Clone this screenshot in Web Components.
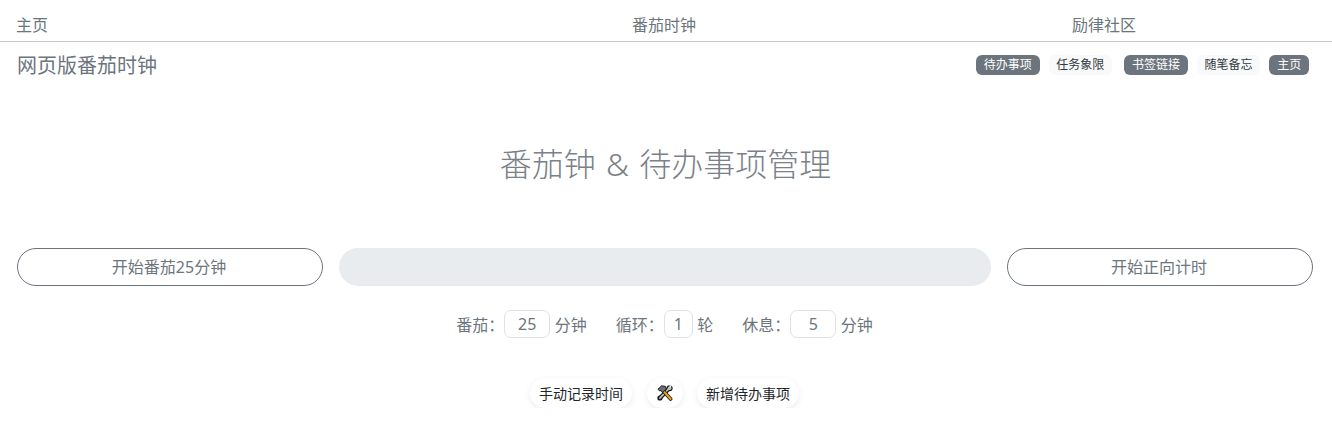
<!DOCTYPE html>
<html lang="zh">
<head>
<meta charset="utf-8">
<title>番茄钟</title>
<style>
  html, body { margin: 0; padding: 0; background: #fff; }
  body { font-family: "Noto Sans", "Noto Sans CJK SC", sans-serif; color: #6c757d; }
</style>
</head>
<body>
<top-nav>
  <span>主页</span>
  <span>番茄时钟</span>
  <span>励律社区</span>
</top-nav>
<sub-bar>
  <span slot="brand">网页版番茄时钟</span>
  <tag-pill dark>待办事项</tag-pill>
  <tag-pill>任务象限</tag-pill>
  <tag-pill dark wide>书签链接</tag-pill>
  <tag-pill>随笔备忘</tag-pill>
  <tag-pill dark>主页</tag-pill>
</sub-bar>
<page-title>番茄钟 &amp; 待办事项管理</page-title>
<timer-row>
  <outline-btn slot="left">开始番茄25分钟</outline-btn>
  <outline-btn slot="right">开始正向计时</outline-btn>
</timer-row>
<settings-row>
  <num-field label="番茄" value="25" unit="分钟" width="46"></num-field>
  <num-field label="循环" value="1" unit="轮" width="29"></num-field>
  <num-field label="休息" value="5" unit="分钟" width="46"></num-field>
</settings-row>
<action-row>
  <soft-btn>手动记录时间</soft-btn>
  <soft-btn icon>
    <svg width="16" height="16" viewBox="0 0 16 16">
      <!-- wrench, bottom left to top right -->
      <path d="M3 13 L12 3.5" stroke="#1c1c1c" stroke-width="4" stroke-linecap="round"/>
      <circle cx="2.9" cy="13" r="2.6" fill="#1c1c1c"/>
      <circle cx="12.6" cy="3.2" r="3" fill="#1c1c1c"/>
      <path d="M3 13 L12 3.5" stroke="#c4c8cb" stroke-width="1.8" stroke-linecap="round"/>
      <circle cx="12.6" cy="3.2" r="1.8" fill="#c4c8cb"/>
      <path d="M12.8 3 L15 .8 L12.4 .2 Z" fill="#fff"/>
      <!-- hammer, orange handle and head top left -->
      <path d="M6 5.5 L13.6 14" stroke="#1c1c1c" stroke-width="3.6" stroke-linecap="round"/>
      <path d="M6.5 6 L13.6 14" stroke="#f2a516" stroke-width="1.9" stroke-linecap="round"/>
      <path d="M1 4.2 L4.6 .8 L8.6 1.4 L9.4 4 L5.6 7.6 L4 5.6 L2.4 5.8 Z" fill="#6b6f73" stroke="#1c1c1c" stroke-width="1" stroke-linejoin="round"/>
    </svg>
  </soft-btn>
  <soft-btn>新增待办事项</soft-btn>
</action-row>

<script>
  // small helper, every element just gets its markup in an open shadow root
  class BaseElement extends HTMLElement {
    constructor() {
      super();
      this.attachShadow({ mode: 'open' });
      this.shadowRoot.innerHTML = this.render();
    }
    render() { return '<slot></slot>'; }
  }

  class TopNav extends BaseElement {
    render() {
      return `<style>
        :host {
          display: grid;
          grid-template-columns: 616px 440px 1fr;
          padding: 7px 16px 1px;
          height: 33px;
          align-items: center;
          border-bottom: 1px solid #c8c8c8;
          font-size: 16px;
        }
      </style><slot></slot>`;
    }
  }

  class SubBar extends BaseElement {
    render() {
      return `<style>
        :host {
          display: flex;
          align-items: center;
          justify-content: space-between;
          height: 45px;
          padding: 0 23px 0 17px;
        }
        .brand { font-size: 20px; color: #6c757d; }
        .tags { display: flex; align-items: center; gap: 9px; }
      </style>
      <div class="brand"><slot name="brand"></slot></div>
      <div class="tags"><slot></slot></div>`;
    }
  }

  class TagPill extends BaseElement {
    render() {
      return `<style>
        :host {
          display: inline-flex;
          align-items: center;
          height: 20px;
          box-sizing: border-box;
          padding: 0 7.8px 1px;
          border-radius: 6px;
          font-size: 12px;
          background: #f8f9fa;
          color: #343a40;
        }
        :host([dark]) { background: #6c757d; color: #fff; }
        :host([wide]) { margin-left: 3px; }
      </style><slot></slot>`;
    }
  }

  class PageTitle extends BaseElement {
    render() {
      return `<style>
        :host {
          display: block;
          text-align: center;
          font-size: 32px;
          font-weight: 300;
          line-height: 48px;
          word-spacing: 2px;
          color: #7b8188;
          padding: 53px 1px 0 0;
          margin-bottom: 60px;
        }
      </style><slot></slot>`;
    }
  }

  class TimerRow extends BaseElement {
    render() {
      return `<style>
        :host {
          display: grid;
          grid-template-columns: 306px 652px 306px;
          gap: 16px;
          padding: 0 17px;
          height: 38px;
        }
        .bar { background: #e9ecef; border-radius: 19px; }
      </style>
      <slot name="left"></slot><div class="bar"></div><slot name="right"></slot>`;
    }
  }

  class OutlineBtn extends BaseElement {
    render() {
      return `<style>
        :host {
          display: flex;
          align-items: center;
          justify-content: center;
          height: 38px;
          box-sizing: border-box;
          padding: 0 2px 2px 0;
          border: 1px solid #6c757d;
          border-radius: 19px;
          font-size: 16px;
          color: #6c757d;
        }
      </style><slot></slot>`;
    }
  }

  class SettingsRow extends BaseElement {
    render() {
      return `<style>
        :host {
          display: flex;
          justify-content: center;
          align-items: center;
          gap: 29px;
          margin-top: 24px;
          padding-right: 3px;
          height: 28px;
        }
      </style><slot></slot>`;
    }
  }

  class NumField extends BaseElement {
    render() {
      const width = this.getAttribute('width');
      return `<style>
        :host { display: inline-flex; align-items: center; font-size: 16px; color: #6c757d; }
        .txt { padding-bottom: 1px; }
        .box {
          width: ${width}px;
          height: 28px;
          box-sizing: border-box;
          border: 1px solid #dee2e6;
          border-radius: 7px;
          display: flex;
          align-items: center;
          justify-content: center;
          margin-right: 4.5px;
          padding-bottom: 1px;
        }
      </style>
      <span class="txt">${this.getAttribute('label')}：</span>
      <span class="box">${this.getAttribute('value')}</span>
      <span class="txt">${this.getAttribute('unit')}</span>`;
    }
  }

  class ActionRow extends BaseElement {
    render() {
      return `<style>
        :host {
          display: flex;
          justify-content: center;
          gap: 14.5px;
          margin-top: 40px;
          padding-right: 3px;
        }
      </style><slot></slot>`;
    }
  }

  class SoftBtn extends BaseElement {
    render() {
      return `<style>
        :host {
          display: inline-flex;
          align-items: center;
          justify-content: center;
          height: 30px;
          padding: 0 9px;
          border-radius: 15px;
          font-size: 14px;
          color: #212529;
          background: #fff;
          box-shadow: 0 2px 6px rgba(0,0,0,.08);
        }
        :host([icon]) { padding: 0 10px; }
      </style><slot></slot>`;
    }
  }

  customElements.define('top-nav', TopNav);
  customElements.define('sub-bar', SubBar);
  customElements.define('tag-pill', TagPill);
  customElements.define('page-title', PageTitle);
  customElements.define('timer-row', TimerRow);
  customElements.define('outline-btn', OutlineBtn);
  customElements.define('settings-row', SettingsRow);
  customElements.define('num-field', NumField);
  customElements.define('action-row', ActionRow);
  customElements.define('soft-btn', SoftBtn);
</script>
</body>
</html>
